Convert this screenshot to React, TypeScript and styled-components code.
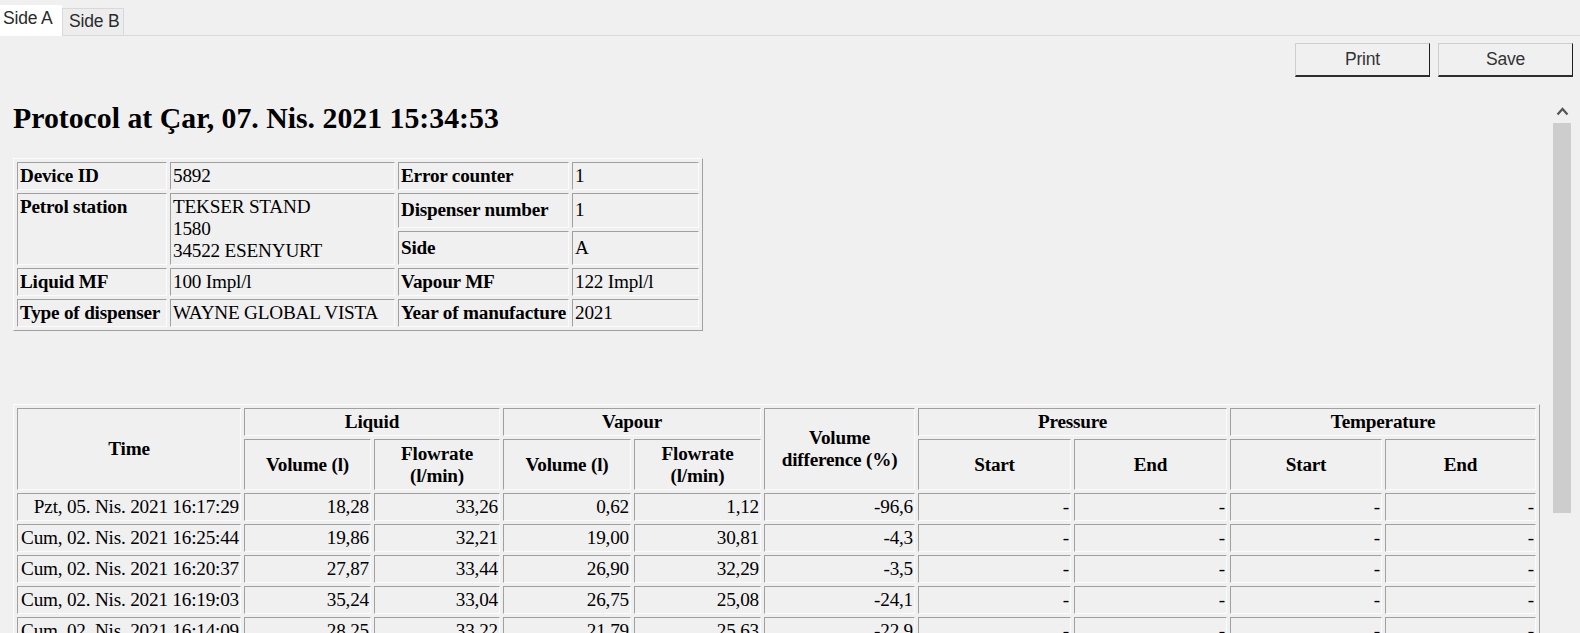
import React from 'react';
import styled, { createGlobalStyle, css } from 'styled-components';

const GlobalStyle = createGlobalStyle`
  html, body {
    margin: 0;
    padding: 0;
    background: #f0f0f0;
  }
`;

const Page = styled.div`
  height: 633px;
  overflow: hidden;
  display: flex;
  flex-direction: column;
  background: #f0f0f0;
  font-family: "Liberation Sans", Arial, sans-serif;
`;

const TabBar = styled.div`
  display: flex;
  align-items: flex-end;
  height: 36px;
  box-sizing: border-box;
  border-bottom: 1px solid #dadada;
`;

const Tab = styled.div<{ $active?: boolean }>`
  box-sizing: border-box;
  display: flex;
  align-items: center;
  font-size: 17.5px;
  letter-spacing: -0.2px;
  color: #2b2b2b;
  ${p => p.$active
    ? css`
        width: 62px;
        height: 31px;
        margin-bottom: -1px;
        padding: 0 0 4px 3px;
        background: #ffffff;
      `
    : css`
        width: 62px;
        height: 27px;
        padding: 0 0 2px 6px;
        background: #ededed;
        border: 1px solid #d9d9d9;
        border-bottom: none;
      `}
`;

const Toolbar = styled.div`
  display: flex;
  justify-content: flex-end;
  gap: 8px;
  padding: 7px 7px 8px 0;
`;

const Button = styled.button`
  width: 135px;
  height: 34px;
  box-sizing: border-box;
  background: #f0f0f0;
  border-top: 1px solid #cfcfcf;
  border-left: 1px solid #cfcfcf;
  border-right: 1px solid #1e1e1e;
  border-bottom: 2px solid #2e2e2e;
  font-family: "Liberation Sans", Arial, sans-serif;
  font-size: 17.5px;
  letter-spacing: -0.2px;
  color: #333333;
  padding: 0;
`;

const Body = styled.div`
  flex: 1;
  min-height: 0;
  display: flex;
`;

const Content = styled.div`
  flex: 1;
  min-width: 0;
  overflow: hidden;
  padding-left: 13px;
  font-family: "Liberation Serif", "Times New Roman", serif;
  color: #000;
`;

const ScrollTrack = styled.div`
  width: 20px;
  margin-right: 7px;
  display: flex;
  flex-direction: column;
  align-items: flex-start;
`;

const ScrollArrow = styled.svg`
  margin: 22px 0 0 3px;
  display: block;
`;

const ScrollThumb = styled.div`
  margin-top: 7px;
  width: 18px;
  height: 390px;
  background: #cdcdcd;
`;

const Title = styled.h2`
  margin: 17px 0 24px 0;
  font-size: 29.8px;
  line-height: 32px;
  font-weight: bold;
`;

const tableBox = css`
  table-layout: fixed;
  border-collapse: separate;
  border-spacing: 3px;
  border-style: solid;
  border-width: 1px;
  border-color: #fbfbfb #a0a0a0 #a0a0a0 #fbfbfb;
  font-size: 19.2px;
  line-height: 22px;
  letter-spacing: -0.2px;
`;

const InfoTable = styled.table`
  ${tableBox}
  width: 690px;
  margin-top: 1px;
`;

const DataTable = styled.table`
  ${tableBox}
  width: 1527px;
  margin-top: 73px;
`;

const cellBox = css`
  box-sizing: border-box;
  padding: 2px 1px;
  border-style: solid;
  border-width: 1px;
  border-color: #a0a0a0 #fbfbfb #fbfbfb #a0a0a0;
  white-space: normal;
  overflow: hidden;
`;

const InfoLabel = styled.th<{ $top?: boolean }>`
  ${cellBox}
  padding-left: 2px;
  text-align: left;
  font-weight: bold;
  vertical-align: ${p => (p.$top ? 'top' : 'middle')};
  white-space: nowrap;
`;

const InfoValue = styled.td<{ $top?: boolean }>`
  ${cellBox}
  padding-left: 2px;
  text-align: left;
  vertical-align: ${p => (p.$top ? 'top' : 'middle')};
  white-space: nowrap;
`;

const HeadRow = styled.tr<{ $tall?: boolean }>`
  height: ${p => (p.$tall ? '51px' : '28px')};
`;

const HeadCell = styled.th`
  ${cellBox}
  text-align: center;
  font-weight: bold;
  vertical-align: middle;
`;

const DataCell = styled.td`
  ${cellBox}
  text-align: right;
  white-space: nowrap;
`;

const infoCols = [150, 225, 171, 127];
const dataCols = [224, 127, 126, 128, 127, 151, 153, 153, 152, 151];

const rows = [
  ['Pzt, 05. Nis. 2021 16:17:29', '18,28', '33,26', '0,62', '1,12', '-96,6'],
  ['Cum, 02. Nis. 2021 16:25:44', '19,86', '32,21', '19,00', '30,81', '-4,3'],
  ['Cum, 02. Nis. 2021 16:20:37', '27,87', '33,44', '26,90', '32,29', '-3,5'],
  ['Cum, 02. Nis. 2021 16:19:03', '35,24', '33,04', '26,75', '25,08', '-24,1'],
  ['Cum, 02. Nis. 2021 16:14:09', '28,25', '33,22', '21,79', '25,63', '-22,9'],
];

export default function App(): React.ReactElement {
  return (
    <Page>
      <GlobalStyle />
      <TabBar>
        <Tab $active>Side A</Tab>
        <Tab>Side B</Tab>
      </TabBar>
      <Toolbar>
        <Button>Print</Button>
        <Button>Save</Button>
      </Toolbar>
      <Body>
        <Content>
          <Title>Protocol at Çar, 07. Nis. 2021 15:34:53</Title>
          <InfoTable>
            <colgroup>
              {infoCols.map((w, i) => <col key={i} style={{ width: w }} />)}
            </colgroup>
            <tbody>
              <tr>
                <InfoLabel>Device ID</InfoLabel>
                <InfoValue>5892</InfoValue>
                <InfoLabel>Error counter</InfoLabel>
                <InfoValue>1</InfoValue>
              </tr>
              <tr>
                <InfoLabel rowSpan={2} $top>Petrol station</InfoLabel>
                <InfoValue rowSpan={2} $top>
                  TEKSER STAND<br />1580<br />34522 ESENYURT
                </InfoValue>
                <InfoLabel>Dispenser number</InfoLabel>
                <InfoValue>1</InfoValue>
              </tr>
              <tr>
                <InfoLabel>Side</InfoLabel>
                <InfoValue>A</InfoValue>
              </tr>
              <tr>
                <InfoLabel>Liquid MF</InfoLabel>
                <InfoValue>100 Impl/l</InfoValue>
                <InfoLabel>Vapour MF</InfoLabel>
                <InfoValue>122 Impl/l</InfoValue>
              </tr>
              <tr>
                <InfoLabel>Type of dispenser</InfoLabel>
                <InfoValue>WAYNE GLOBAL VISTA</InfoValue>
                <InfoLabel>Year of manufacture</InfoLabel>
                <InfoValue>2021</InfoValue>
              </tr>
            </tbody>
          </InfoTable>
          <DataTable>
            <colgroup>
              {dataCols.map((w, i) => <col key={i} style={{ width: w }} />)}
            </colgroup>
            <thead>
              <HeadRow>
                <HeadCell rowSpan={2}>Time</HeadCell>
                <HeadCell colSpan={2}>Liquid</HeadCell>
                <HeadCell colSpan={2}>Vapour</HeadCell>
                <HeadCell rowSpan={2}>Volume<br />difference (%)</HeadCell>
                <HeadCell colSpan={2}>Pressure</HeadCell>
                <HeadCell colSpan={2}>Temperature</HeadCell>
              </HeadRow>
              <HeadRow $tall>
                <HeadCell>Volume (l)</HeadCell>
                <HeadCell>Flowrate (l/min)</HeadCell>
                <HeadCell>Volume (l)</HeadCell>
                <HeadCell>Flowrate (l/min)</HeadCell>
                <HeadCell>Start</HeadCell>
                <HeadCell>End</HeadCell>
                <HeadCell>Start</HeadCell>
                <HeadCell>End</HeadCell>
              </HeadRow>
            </thead>
            <tbody>
              {rows.map((r, i) => (
                <tr key={i}>
                  {r.map((v, j) => <DataCell key={j}>{v}</DataCell>)}
                  <DataCell>-</DataCell>
                  <DataCell>-</DataCell>
                  <DataCell>-</DataCell>
                  <DataCell>-</DataCell>
                </tr>
              ))}
            </tbody>
          </DataTable>
        </Content>
        <ScrollTrack>
          <ScrollArrow width="13" height="9" viewBox="0 0 13 9">
            <polyline points="1.5,7.5 6.5,2 11.5,7.5" fill="none" stroke="#555" strokeWidth="2.2" />
          </ScrollArrow>
          <ScrollThumb />
        </ScrollTrack>
      </Body>
    </Page>
  );
}
